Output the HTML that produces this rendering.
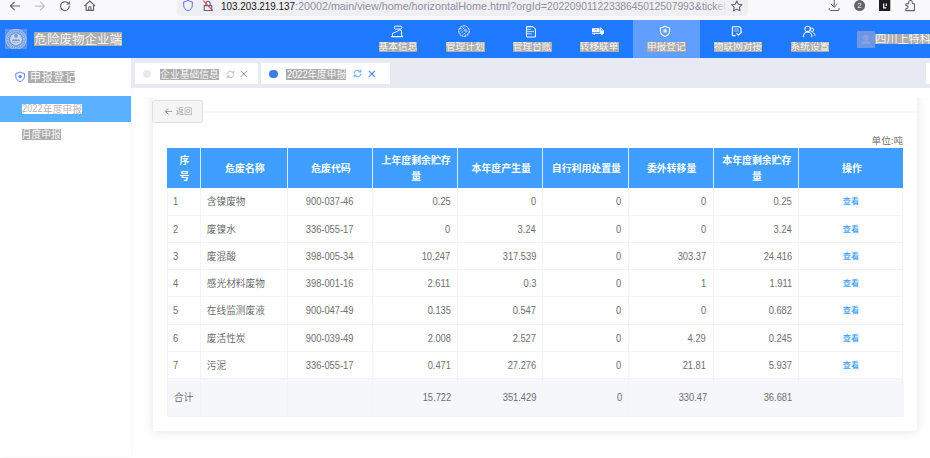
<!DOCTYPE html>
<html lang="zh-CN">
<head>
<meta charset="utf-8">
<title>危险废物企业端</title>
<style>
html,body{margin:0;padding:0;overflow:hidden}
body{width:930px;height:458px;overflow:hidden;background:#fff;position:relative;font-weight:350;font-family:"Liberation Sans","Noto Sans CJK SC",sans-serif;color:#606266}
.a{position:absolute}
.hl{position:absolute;background:#adadad;color:#fcfcfc;font-weight:350;white-space:nowrap;text-align:center;overflow:hidden}
.chrome{left:0;top:0;width:930px;height:20px;background:#f9f9fb}
.urlbar{left:177px;top:-4px;width:571px;height:20.3px;background:#f0f0f4;border-radius:3px}
.url{left:220.5px;top:0;height:16px;line-height:13.5px;font-size:11px;white-space:nowrap;transform-origin:0 0}
.header{left:0;top:20px;width:930px;height:38px;background:#1f7aff}
.navact{left:633px;top:20px;width:67px;height:38px;background:#609fff}
.side{left:0;top:58px;width:131px;height:398.5px;background:#fff;box-shadow:0 0 3px rgba(0,21,41,.08)}
.sideact{left:0;top:96px;width:131px;height:25.5px;background:#5ab1ff}
.tabbar{left:131px;top:58px;width:799px;height:29.7px;background:#e7eaf3}
.tab{top:62.5px;height:21.7px;background:#fff}
.card{left:152.5px;top:92px;width:764.6px;height:339px;background:#fff;border-radius:3px;box-shadow:0 1px 12px rgba(0,0,20,.105)}
.clip{left:131px;top:97px;width:799px;height:361px;overflow:hidden}
.divider{left:152.5px;top:111px;width:764.6px;height:2px;background:#f7f8fb}
.btn{left:152.3px;top:100.2px;width:50.7px;height:22.4px;box-sizing:border-box;border:1px solid #e0e0e0;border-radius:2.5px;background:#f5f5f5;color:#9a9a9a;font-size:8.2px;line-height:21.6px;text-align:left;padding-left:22.4px;white-space:nowrap}
.unit{left:803px;top:134px;width:100px;text-align:right;font-size:9.6px;line-height:14px;color:#646464;white-space:nowrap}
.th{left:167px;top:148.4px;width:736px;height:39.6px;display:flex;background:#409eff;color:#fff;font-weight:700;font-size:9.9px;line-height:15.7px}
.th>div{box-sizing:border-box;flex:none;display:flex;align-items:center;justify-content:center;text-align:center;padding:1.4px 5px 0 7px;border-right:1px solid #d4e8ff}
.th>div:last-child{border-right:0;width:104px}
.tbl{left:167px;top:188px;width:737px}
.r{display:flex;height:27.2px;font-size:9.7px;line-height:28px;color:#606266}
.r.r1{height:27.8px;line-height:28.6px}
.r>div{box-sizing:border-box;border-right:1px solid #f2f4f9;border-bottom:1px solid #f2f4f9;padding:0 6.8px 0 5.8px;white-space:nowrap;overflow:hidden;flex:none}
.r>div:first-child{border-left:1px solid #f2f4f9}
.r.f{height:37.8px;line-height:38.6px;background:#f5f7fa}
.c1{width:34px}.c2{width:87px}.c3{width:85px;text-align:center}.c4{width:85.3px}.c5{width:84.9px}.c6{width:85.4px}.c7{width:85.2px}.c8{width:85.2px}.c9{width:104.5px;text-align:center}
.c4,.c5,.c6,.c7,.c8{text-align:right}
.n{display:inline-block;position:relative;top:-.9px;font-size:11.2px;transform:scaleX(.834);transform-origin:100% 50%;color:#6e7074}
.c8 .n{left:1px}
.c5 .n{left:.7px}
.r.f .n{left:1.2px}
.c1 .n{transform-origin:0 50%;left:-.8px}
.c3 .n{transform-origin:50% 50%}
.dw{display:inline-block;width:21.4px;vertical-align:top}
.dn{display:inline-block;font-size:11.2px;transform:scaleX(.83);transform-origin:0 50%;position:relative;top:-1px;left:.6px}
.lk{color:#409eff;font-size:8.2px;position:relative;top:-1px;left:.8px;font-weight:500}
</style>
</head>
<body>
<div class="a chrome"></div>
<div class="a urlbar"></div>
<svg class="a" style="left:8px;top:0px" width="14" height="12" viewBox="0 0 14 12" ><path d="M11.6 6H2.6M6.4 2.1L2.4 6l4 3.9" fill="none" stroke="#63636d" stroke-width="1.1" stroke-linecap="round" stroke-linejoin="round"/></svg><svg class="a" style="left:33px;top:0px" width="14" height="12" viewBox="0 0 14 12" ><path d="M2.2 6h9M7.5 2.1L11.5 6l-4 3.9" fill="none" stroke="#c3c3ca" stroke-width="1.25" stroke-linecap="round" stroke-linejoin="round"/></svg><svg class="a" style="left:58px;top:0px" width="14" height="12" viewBox="0 0 14 12" ><path d="M11.3 6.2A4.4 4.4 0 1 1 9.6 2.7" fill="none" stroke="#63636d" stroke-width="1.2" stroke-linecap="round"/><path d="M11.9 1.1v3.5H8.4z" fill="#63636d"/></svg><svg class="a" style="left:83px;top:0px" width="14" height="12" viewBox="0 0 14 12" ><path d="M1.8 5.6L6.8 1l5 4.6M3.1 5v5.4h7.4V5" fill="none" stroke="#63636d" stroke-width="1.2" stroke-linecap="round" stroke-linejoin="round"/><path d="M5.7 10.4V7.6a1.1 1.1 0 0 1 2.2 0v2.8" fill="none" stroke="#63636d" stroke-width="1.1"/></svg><svg class="a" style="left:181px;top:0px" width="14" height="12" viewBox="0 0 14 12" ><defs><linearGradient id="sg" x1="0" y1="0" x2="1" y2="1"><stop offset="0" stop-color="#8a5cf5"/><stop offset="1" stop-color="#3f7cf0"/></linearGradient></defs><path d="M7 .3C5.600 1.300 4.200 1.800 2.700 1.900v3.300c0 2.800 1.700 4.700 4.300 5.700 2.600-1.000 4.300-2.900 4.300-5.700V1.900C9.800 1.800 8.400 1.300 7 .3z" fill="none" stroke="url(#sg)" stroke-width="1.000" stroke-linejoin="round"/></svg><svg class="a" style="left:200.5px;top:0px" width="14" height="12" viewBox="0 0 14 12" ><path d="M3.2 5.600h7.600v4.900H3.200z" fill="none" stroke="#63636d" stroke-width="1.1" stroke-linejoin="round"/><path d="M4.9 5.500V3.300a2.100 2.100 0 0 1 4.200 0v2.200" fill="none" stroke="#63636d" stroke-width="1.1"/><path d="M2.500 .8l9.200 9.900" stroke="#ff3b6b" stroke-width="1.1" stroke-linecap="round"/></svg><svg class="a" style="left:730px;top:0px" width="14" height="12" viewBox="0 0 14 12" ><path d="M6.800 .900l1.600 3.300 3.600 .5-2.600 2.500 .6 3.600-3.200-1.700-3.200 1.700 .600-3.600-2.600-2.500 3.600-.5z" fill="none" stroke="#63636d" stroke-width="1.050" stroke-linejoin="round"/></svg><svg class="a" style="left:827px;top:0px" width="14" height="12" viewBox="0 0 14 12" ><path d="M7.200 .3v6.600M4.300 4.300l2.900 2.900 2.900-2.900M2.300 8.400v1.000a1.100 1.100 0 0 0 1.100 1.100h7.600a1.100 1.100 0 0 0 1.100-1.100v-1.000" fill="none" stroke="#63636d" stroke-width="1.000" stroke-linecap="round" stroke-linejoin="round"/></svg><svg class="a" style="left:853px;top:0px" width="14" height="12" viewBox="0 0 14 12" ><circle cx="6.600" cy="5.600" r="5.500" fill="#63636d"/><text x="6.600" y="8.300" font-family="Liberation Sans,sans-serif" font-size="7.200" fill="#fff" text-anchor="middle">2</text></svg><svg class="a" style="left:879px;top:0px" width="12" height="12" viewBox="0 0 12 12" ><rect x="0" y="-1" width="11.300" height="12" fill="#1c1b22"/><path d="M4.700 3.400v4.400h2.600M7.300 3.400v2.600" fill="none" stroke="#fff" stroke-width="1.150"/></svg><svg class="a" style="left:903px;top:0px" width="14" height="12" viewBox="0 0 14 12" ><path d="M2.900 3.800h2.800V2.300a1.800 1.800 0 0 1 3.600 0v1.500h2.200v6.800H2.900V8.500h.7a1.450 1.450 0 0 0 0-2.900h-.7z" fill="none" stroke="#63636d" stroke-width="1.050" stroke-linejoin="round"/></svg>
<div class="a url" style="left:220.5px;color:#15141a;transform:scaleX(0.896)">103.203.219.137</div>
<div class="a url" style="left:294.6px;color:#8f8f9d;transform:scaleX(0.978)">:20002/main/view/home/horizontalHome.html?orgId=</div>
<div class="a url" style="left:547.3px;color:#8f8f9d;transform:scaleX(0.932)">20220901122338645012507993</div>
<div class="a url" style="left:695px;color:#8f8f9d;transform:scaleX(0.94)">&amp;ticket</div>
<div class="a" style="left:715px;top:0;width:14px;height:16px;background:linear-gradient(90deg,rgba(240,240,244,0),#f0f0f4 85%)"></div>
<div class="a header"></div>
<div class="a navact"></div>
<svg class="a" style="left:5px;top:28.8px" width="22" height="20.6" viewBox="0 0 22 20.6" ><rect width="22" height="20.6" fill="#5f97ea"/><circle cx="11" cy="10.300" r="10.100" fill="#6a9be8" stroke="#c3cee4" stroke-width=".8"/><circle cx="11" cy="10.300" r="8.000" fill="none" stroke="#aec2e8" stroke-width="2.000" stroke-dasharray="1.100 .700"/><circle cx="11" cy="10.300" r="5.900" fill="#d0d5df"/><circle cx="11" cy="6.800" r="1.900" fill="#6a9be8"/><path d="M6.900 11.900l1.700-1.900 1.200 1.100 1.200-1.400 1.200 1.400 1.200-1.100 1.700 1.900z" fill="#6a9be8"/><path d="M7.300 13.300q3.700 1.300 7.400 0" fill="none" stroke="#8fb0e6" stroke-width=".800"/></svg>
<div class="hl" style="left:34.4px;top:32.2px;width:87.60px;height:13.80px;font-size:12.5px;line-height:16.80px;">危险废物企业端</div>
<div class="hl" style="left:378.56px;top:42.2px;width:38.88px;height:9.70px;font-size:9.7px;line-height:10.80px;">基本信息</div>
<div class="hl" style="left:445.66px;top:42.2px;width:38.88px;height:9.70px;font-size:9.7px;line-height:10.80px;">管理计划</div>
<div class="hl" style="left:512.76px;top:42.2px;width:38.88px;height:9.70px;font-size:9.7px;line-height:10.80px;">管理台账</div>
<div class="hl" style="left:579.66px;top:42.2px;width:38.88px;height:9.70px;font-size:9.7px;line-height:10.80px;">转移联单</div>
<div class="hl" style="left:646.86px;top:42.2px;width:38.88px;height:9.70px;font-size:9.7px;line-height:10.80px;">申报登记</div>
<div class="hl" style="left:713.7px;top:42.2px;width:48.60px;height:9.70px;font-size:9.7px;line-height:10.80px;">物联网对接</div>
<div class="hl" style="left:790.56px;top:42.2px;width:38.88px;height:9.70px;font-size:9.7px;line-height:10.80px;">系统设置</div>
<svg class="a" style="left:390px;top:25px" width="14" height="13" viewBox="0 0 14 13" ><rect x="4.200" y="1.100" width="7.600" height="3.000" rx="1.500" fill="none" stroke="#fff" stroke-width=".95"/><path d="M1.300 11.600h11.400" fill="none" stroke="#fff" stroke-width="1.100" stroke-linecap="round"/><path d="M2.300 11.400l.3-3.000 5.000-2.300 2.300-1.300 1.500 .700 .400 5.900" fill="none" stroke="#fff" stroke-width="1.000" stroke-linejoin="round"/></svg><svg class="a" style="left:457px;top:24px" width="14" height="14" viewBox="0 0 14 14" ><circle cx="7" cy="7.100" r="5.300" fill="none" stroke="#fff" stroke-width="1.000" stroke-dasharray="2.200 .700"/><path d="M3.000 5.000l3.200-2.200M2.600 7.600l5.600-4.300M3.400 9.800l6.000-5.000M5.400 11.200l5.800-4.600M8.000 11.600l3.600-2.800" stroke="#fff" stroke-width=".800" stroke-dasharray="1.300 .800" opacity=".900"/><circle cx="8.400" cy="6.300" r="1.500" fill="#8fbcff"/></svg><svg class="a" style="left:525px;top:25px" width="12" height="13" viewBox="0 0 12 13" ><path d="M1.600 1.600h6.200l2.600 2.500v7.300a.5 .5 0 0 1-.5 .5H2.100a.5 .5 0 0 1-.5-.5z" fill="none" stroke="#fff" stroke-width="1.050" stroke-linejoin="round"/><path d="M2.200 4.400h3.800M2.200 6.600h6.800M2.200 8.800h4.400" stroke="#fff" stroke-width=".900" opacity=".85"/></svg><svg class="a" style="left:591px;top:26px" width="14" height="10" viewBox="0 0 14 10" ><path d="M1.000 2.200h7.600v4.000H1.000z" fill="#fff"/><path d="M9.200 1.200l2.500 1.700 1.300 2.400v2.100H9.200z" fill="#fff"/><path d="M1.000 6.900h12.000v.9H1.000z" fill="#fff"/><path d="M2.100 7.800h2.600l-1.300 1.500zM9.600 7.800h2.600l-1.300 1.500z" fill="#fff"/><path d="M3.500 4.300l1.300-1.000 1.300 1.000" stroke="#1f7aff" stroke-width=".700" fill="none"/><path d="M10.400 3.000l.9 2.000" stroke="#1f7aff" stroke-width=".700"/></svg><svg class="a" style="left:658px;top:25px" width="14" height="13" viewBox="0 0 14 13" ><path d="M7 1.200c-1.500 1.000-3.000 1.400-4.600 1.500v3.300c0 2.600 1.800 4.400 4.600 5.400 2.800-1.000 4.600-2.800 4.600-5.400V2.700C10.000 2.600 8.500 2.200 7 1.200z" fill="none" stroke="#fff" stroke-width="1.050" stroke-linejoin="round"/><circle cx="7" cy="5.900" r="1.900" fill="#d6e6ff"/></svg><svg class="a" style="left:731px;top:25px" width="12" height="13" viewBox="0 0 12 13" ><path d="M4.600 10.600H1.400V1.800h6.400a2.200 2.200 0 0 1 2.200 2.200v3.200" fill="none" stroke="#fff" stroke-width="1.100" stroke-linejoin="round"/><path d="M2.900 4.100h5.000M2.900 6.000h5.000" stroke="#fff" stroke-width=".650" opacity=".85"/><path d="M5.900 8.700l1.500 1.500 3.300-3.200" fill="none" stroke="#fff" stroke-width="1.100" stroke-linecap="round" stroke-linejoin="round"/></svg><svg class="a" style="left:802px;top:25px" width="14" height="13" viewBox="0 0 14 13" ><circle cx="5.600" cy="3.900" r="2.700" fill="none" stroke="#fff" stroke-width="1.050"/><path d="M1.300 11.700c0-2.800 1.900-4.800 4.300-4.800s4.300 2.000 4.300 4.800" fill="none" stroke="#fff" stroke-width="1.050" stroke-linecap="round"/><circle cx="10.000" cy="4.800" r="1.700" fill="none" stroke="#fff" stroke-width=".900"/><path d="M10.800 7.300c1.200 .600 2.000 1.700 2.100 3.200" fill="none" stroke="#fff" stroke-width=".950" stroke-linecap="round"/></svg>
<div class="a" style="left:857.4px;top:31px;width:17.6px;height:17px;background:#6b97e6"></div>
<svg class="a" style="left:857.4px;top:31px" width="17.6" height="17" viewBox="0 0 17.6 17" ><circle cx="9.000" cy="6.500" r="2.900" fill="#8a9ee2"/><path d="M4.200 13.000c.3-2.400 2.200-3.600 4.800-3.600s4.500 1.200 4.800 3.600z" fill="#8a9ee2"/></svg>
<div class="hl" style="left:875px;top:34.2px;width:55.00px;height:9.80px;font-size:11.1px;line-height:11.80px;text-align:left;text-indent:.3px;">四川上特科技</div>
<div class="a side"></div>
<div class="a sideact"></div>
<svg class="a" style="left:14px;top:70.6px" width="12" height="12" viewBox="0 0 12 12" ><path d="M6.100 1.000c-1.400 .900-2.800 1.300-4.300 1.400v3.200c0 2.400 1.700 4.200 4.300 5.100 2.600-.9 4.300-2.700 4.300-5.100V2.400C8.900 2.300 7.500 1.900 6.100 1.000z" fill="none" stroke="#5b83ff" stroke-width="1.000" stroke-linejoin="round"/><circle cx="6.100" cy="5.600" r="1.700" fill="#5b83ff"/></svg>
<div class="hl" style="left:28px;top:71.1px;width:47.30px;height:11.80px;font-size:11.1px;line-height:13.80px;letter-spacing:.5px;text-indent:2.1px;">申报登记</div>
<div class="hl" style="left:21.7px;top:104px;width:60.20px;height:10.20px;font-size:9.7px;line-height:11.40px;background:#fff;color:#b2b2b2;text-align:left;"><span class="dw"><span class="dn">2022</span></span>年度申报</div>
<div class="hl" style="left:21.7px;top:129.1px;width:39.30px;height:10.70px;font-size:9.8px;line-height:11.90px;">月度申报</div>
<div class="a tabbar"></div>
<div class="a tab" style="left:134.7px;width:123.1px"></div>
<div class="a tab" style="left:261px;width:129px"></div>
<div class="a tab" style="left:926px;width:4px;border-radius:2px 0 0 2px"></div>
<div class="a" style="left:143.1px;top:69.8px;width:8.2px;height:8.2px;border-radius:50%;background:#e9e9e9"></div>
<div class="a" style="left:269.3px;top:69.7px;width:8.4px;height:8.4px;border-radius:50%;background:#3d7de6"></div>
<div class="hl" style="left:160px;top:69px;width:59.00px;height:10.80px;font-size:9.8px;line-height:12.00px;">企业基础信息</div>
<div class="hl" style="left:286px;top:69px;width:60.40px;height:10.80px;font-size:9.7px;line-height:12.00px;text-align:left;"><span class="dw"><span class="dn">2022</span></span>年度申报</div>
<svg class="a" style="left:225.6px;top:69.5px" width="9" height="9" viewBox="0 0 9 9" ><path d="M1.100 3.900A3.500 3.500 0 0 1 7.300 2.500M7.900 5.100A3.500 3.500 0 0 1 1.700 6.500" fill="none" stroke="#b4b4b4" stroke-width="0.85" stroke-linecap="round"/><path d="M7.900 .900v2.000H5.900M1.100 8.100V6.100h2.000" fill="none" stroke="#b4b4b4" stroke-width="0.85" stroke-linecap="round" stroke-linejoin="round"/></svg><svg class="a" style="left:239.8px;top:70.1px" width="8" height="8" viewBox="0 0 8 8" ><path d="M1.200 1.200l5.400 5.400M6.600 1.200L1.200 6.600" stroke="#858585" stroke-width="0.9" stroke-linecap="round"/></svg><svg class="a" style="left:353.1px;top:69.4px" width="9" height="9" viewBox="0 0 9 9" ><path d="M1.100 3.900A3.500 3.500 0 0 1 7.300 2.500M7.900 5.100A3.500 3.500 0 0 1 1.700 6.500" fill="none" stroke="#58a6f5" stroke-width="1.0" stroke-linecap="round"/><path d="M7.900 .900v2.000H5.900M1.100 8.100V6.100h2.000" fill="none" stroke="#58a6f5" stroke-width="1.0" stroke-linecap="round" stroke-linejoin="round"/></svg><svg class="a" style="left:367.9px;top:70.2px" width="8" height="8" viewBox="0 0 8 8" ><path d="M1.200 1.200l5.400 5.400M6.600 1.200L1.200 6.600" stroke="#4f86e8" stroke-width="1.1" stroke-linecap="round"/></svg>
<div class="a clip"><div class="a card" style="left:21.5px;top:-5px"></div></div>
<div class="a divider"></div>
<div class="a btn">返回</div>
<svg class="a" style="left:163.5px;top:107.0px" width="9" height="9" viewBox="0 0 9 9" ><path d="M7.700 4.400H1.500M4.000 1.700L1.300 4.400l2.700 2.700" fill="none" stroke="#8e8e8e" stroke-width=".9" stroke-linecap="round" stroke-linejoin="round"/></svg>
<div class="a unit">单位:吨</div>
<div class="a th"><div class="c1">序<br>号</div><div class="c2">危废名称</div><div class="c3">危废代码</div><div class="c4">上年度剩余贮存量</div><div class="c5">本年度产生量</div><div class="c6">自行利用处置量</div><div class="c7">委外转移量</div><div class="c8">本年度剩余贮存量</div><div class="c9">操作</div></div>
<div class="a tbl">
<div class="r r1"><div class="c1"><span class="n">1</span></div><div class="c2">含镍废物</div><div class="c3"><span class="n">900-037-46</span></div><div class="c4"><span class="n">0.25</span></div><div class="c5"><span class="n">0</span></div><div class="c6"><span class="n">0</span></div><div class="c7"><span class="n">0</span></div><div class="c8"><span class="n">0.25</span></div><div class="c9"><span class="lk">查看</span></div></div>
<div class="r"><div class="c1"><span class="n">2</span></div><div class="c2">废镍水</div><div class="c3"><span class="n">336-055-17</span></div><div class="c4"><span class="n">0</span></div><div class="c5"><span class="n">3.24</span></div><div class="c6"><span class="n">0</span></div><div class="c7"><span class="n">0</span></div><div class="c8"><span class="n">3.24</span></div><div class="c9"><span class="lk">查看</span></div></div>
<div class="r"><div class="c1"><span class="n">3</span></div><div class="c2">废混酸</div><div class="c3"><span class="n">398-005-34</span></div><div class="c4"><span class="n">10.247</span></div><div class="c5"><span class="n">317.539</span></div><div class="c6"><span class="n">0</span></div><div class="c7"><span class="n">303.37</span></div><div class="c8"><span class="n">24.416</span></div><div class="c9"><span class="lk">查看</span></div></div>
<div class="r"><div class="c1"><span class="n">4</span></div><div class="c2">感光材料废物</div><div class="c3"><span class="n">398-001-16</span></div><div class="c4"><span class="n">2.611</span></div><div class="c5"><span class="n">0.3</span></div><div class="c6"><span class="n">0</span></div><div class="c7"><span class="n">1</span></div><div class="c8"><span class="n">1.911</span></div><div class="c9"><span class="lk">查看</span></div></div>
<div class="r"><div class="c1"><span class="n">5</span></div><div class="c2">在线监测废液</div><div class="c3"><span class="n">900-047-49</span></div><div class="c4"><span class="n">0.135</span></div><div class="c5"><span class="n">0.547</span></div><div class="c6"><span class="n">0</span></div><div class="c7"><span class="n">0</span></div><div class="c8"><span class="n">0.682</span></div><div class="c9"><span class="lk">查看</span></div></div>
<div class="r"><div class="c1"><span class="n">6</span></div><div class="c2">废活性炭</div><div class="c3"><span class="n">900-039-49</span></div><div class="c4"><span class="n">2.008</span></div><div class="c5"><span class="n">2.527</span></div><div class="c6"><span class="n">0</span></div><div class="c7"><span class="n">4.29</span></div><div class="c8"><span class="n">0.245</span></div><div class="c9"><span class="lk">查看</span></div></div>
<div class="r"><div class="c1"><span class="n">7</span></div><div class="c2">污泥</div><div class="c3"><span class="n">336-055-17</span></div><div class="c4"><span class="n">0.471</span></div><div class="c5"><span class="n">27.276</span></div><div class="c6"><span class="n">0</span></div><div class="c7"><span class="n">21.81</span></div><div class="c8"><span class="n">5.937</span></div><div class="c9"><span class="lk">查看</span></div></div>
<div class="r f"><div class="c1">合计</div><div class="c2"></div><div class="c3"></div><div class="c4"><span class="n">15.722</span></div><div class="c5"><span class="n">351.429</span></div><div class="c6"><span class="n">0</span></div><div class="c7"><span class="n">330.47</span></div><div class="c8"><span class="n">36.681</span></div><div class="c9"></div></div>
</div>
</body>
</html>
